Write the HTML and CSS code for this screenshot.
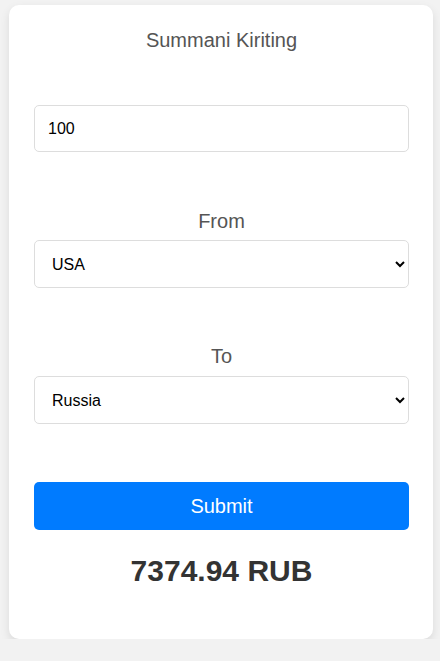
FILE: index.html
```html
<!DOCTYPE html>
<html lang="en">
<head>
  <meta charset="UTF-8">
  <title>Valyuta Konvertor</title>
  <link rel="stylesheet" href="styles.css">
</head>
<body>

  <div class="container">
    <h2 class="title">Summani Kiriting</h2>

    <input type="number" id="amount" class="field amount" value="100">

    <label for="fromCurrency" class="label">From</label>
    <select id="fromCurrency" class="field select">
      <option value="USD" selected>USA</option>
      <option value="RUB">Russia</option>
      <option value="UZS">Uzbekistan</option>
    </select>

    <label for="toCurrency" class="label to">To</label>
    <select id="toCurrency" class="field select">
      <option value="USD">USA</option>
      <option value="RUB" selected>Russia</option>
      <option value="UZS">Uzbekistan</option>
    </select>

    <button id="submitBtn" class="submit">Submit</button>

    <div id="result" class="result">7374.94 RUB</div>
  </div>

</body>
</html>
```

FILE: styles.css
```css
body {
  font-family: "Liberation Sans", Arial, sans-serif;
  background-color: #f2f2f2;
  margin: 0;
  padding: 5px 7px 0 9px;
}
.container {
  background-color: #fff;
  border-radius: 10px;
  box-shadow: 0 4px 10px rgba(0,0,0,0.1);
  padding: 24px 24px 51px 25px;
  text-align: center;
}
.title {
  font-size: 20px;
  font-weight: normal;
  line-height: 23px;
  color: #555;
  margin: 0 0 53px 0;
}
.field {
  display: block;
  width: 100%;
  box-sizing: border-box;
  font-family: "Liberation Sans", Arial, sans-serif;
  font-size: 16px;
  color: #000;
  background-color: #fff;
  border: 1px solid #ddd;
  border-radius: 5px;
  padding: 0 13px;
  margin: 0;
}
.amount {
  height: 47px;
}
.select {
  height: 48px;
  padding: 0 12px 0 13px;
}
.label {
  display: block;
  font-size: 20px;
  line-height: 23px;
  color: #555;
  margin: 58px 0 7px 0;
}
.label.to {
  margin: 57px 0 8px 0;
}
.submit {
  display: block;
  width: 100%;
  height: 48px;
  margin: 58px 0 0 0;
  font-family: "Liberation Sans", Arial, sans-serif;
  font-size: 20px;
  color: #fff;
  background-color: #007bff;
  border: none;
  border-radius: 5px;
  cursor: pointer;
}
.submit:hover {
  background-color: #0069d9;
}
.result {
  font-size: 30px;
  font-weight: bold;
  line-height: 34px;
  color: #333;
  margin-top: 24px;
}
```
